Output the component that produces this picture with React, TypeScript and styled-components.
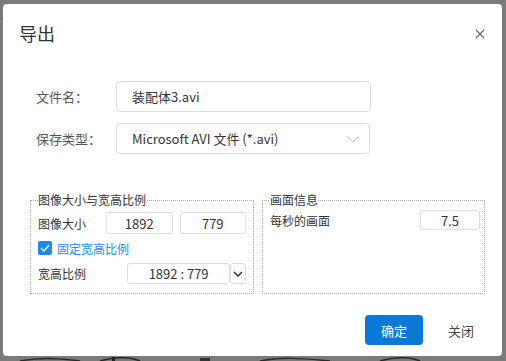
import React from "react";
import styled, { createGlobalStyle } from "styled-components";

const Global = createGlobalStyle`
  html, body { margin: 0; padding: 0; }
  body {
    width: 506px; height: 361px; overflow: hidden;
    font-family: "Noto Sans CJK SC", sans-serif;
    color: #333;
  }
`;

const Backdrop = styled.div`
  position: relative;
  width: 506px;
  height: 361px;
  box-sizing: border-box;
  padding: 4px 4px 5px 3px;
  background: #7b7b7b;
  display: flex;
`;

const BgArt = styled.svg`
  position: absolute;
  left: 0; top: 0;
`;

const Dialog = styled.div`
  position: relative;
  flex: 1;
  background: #fff;
  border-radius: 4px;
  display: flex;
  flex-direction: column;
`;

const Header = styled.div`
  height: 58px;
  display: flex;
  align-items: center;
  justify-content: space-between;
  padding: 0 16px 0 16px;
`;

const Title = styled.div`
  font-size: 18px;
  color: #333;
  line-height: 24px;
`;

const Close = styled.div`
  width: 12px;
  height: 12px;
  display: flex;
  align-items: center;
  justify-content: center;
  margin-top: 1px;
`;

const Form = styled.div`
  display: flex;
  flex-direction: column;
  gap: 11px;
  padding: 19px 0 0 33px;
`;

const FormRow = styled.div`
  display: flex;
  align-items: center;
`;

const Label = styled.div`
  width: 80px;
  font-size: 13px;
  color: #555;
`;

const TextBox = styled.div<{ $w: number }>`
  box-sizing: border-box;
  width: ${(p) => p.$w}px;
  height: 31px;
  border: 1px solid #dcdcdc;
  border-radius: 4px;
  display: flex;
  align-items: center;
  justify-content: space-between;
  padding: 0 9px 0 15px;
  font-size: 13px;
  color: #333;
`;

const Groups = styled.div`
  display: flex;
  gap: 8px;
  padding: 38px 0 0 27px;
`;

const Group = styled.fieldset<{ $w: number; $pr: number }>`
  box-sizing: border-box;
  width: ${(p) => p.$w}px;
  height: 102px;
  margin: 0;
  padding: 0 ${(p) => p.$pr}px 0 7px;
  border: 1px dotted #a8a8a8;
  min-width: 0;
  display: flex;
  flex-direction: column;
`;

const Legend = styled.legend`
  padding: 0;
  font-size: 12px;
  line-height: 16px;
  color: #333;
`;

const GRow = styled.div<{ $h: number; $mt: number }>`
  display: flex;
  align-items: center;
  height: ${(p) => p.$h}px;
  margin-top: ${(p) => p.$mt}px;
  font-size: 12px;
`;

const GLabel = styled.div<{ $w?: number }>`
  width: ${(p) => (p.$w ? `${p.$w}px` : "auto")};
  flex: ${(p) => (p.$w ? "none" : "1")};
  color: #333;
`;

const SmallBox = styled.div<{ $w: number; $h: number; $ml?: number }>`
  box-sizing: border-box;
  width: ${(p) => p.$w}px;
  height: ${(p) => p.$h}px;
  margin-left: ${(p) => p.$ml ?? 0}px;
  border: 1px solid #dedede;
  border-radius: 3px;
  display: flex;
  align-items: center;
  justify-content: center;
  font-size: 13px;
  color: #333;
`;

const DropBtn = styled.div`
  box-sizing: border-box;
  width: 16px;
  height: 21px;
  border: 1px solid #dedede;
  border-radius: 3px;
  display: flex;
  align-items: center;
  justify-content: center;
`;

const Check = styled.div`
  width: 14px;
  height: 14px;
  border-radius: 2px;
  background: #1a8cf0;
  display: flex;
  align-items: center;
  justify-content: center;
  margin-right: 5px;
`;

const CheckText = styled.span`
  color: #1a8cf0;
`;

const Footer = styled.div`
  margin-top: auto;
  display: flex;
  justify-content: flex-end;
  align-items: center;
  gap: 9px;
  padding: 0 12px 11px 0;
`;

const Button = styled.button<{ $primary?: boolean }>`
  width: 58px;
  height: 30px;
  border: none;
  border-radius: 4px;
  font-size: 13px;
  font-family: "Noto Sans CJK SC", sans-serif;
  background: ${(p) => (p.$primary ? "#0a79d8" : "transparent")};
  color: ${(p) => (p.$primary ? "#fff" : "#444")};
  padding: 0;
`;

export default function App() {
  return (
    <>
      <Global />
      <Backdrop>
        <BgArt width="506" height="361">
          <path d="M0 19 H3" stroke="#6a6a6a" />
          <path d="M20 361 C40 357 60 358 80 361 M100 361 C115 357 130 357 140 361 M260 361 C280 357 300 358 330 361 M380 361 C395 357 410 357 420 361" stroke="#2a2a2a" strokeWidth="1.5" fill="none" />
          <rect x="112" y="357" width="3" height="4" fill="#222" />
          <rect x="200" y="358" width="10" height="3" fill="#333" />
        </BgArt>
        <Dialog>
          <Header>
            <Title>导出</Title>
            <Close>
              <svg width="10" height="10" viewBox="0 0 10 10">
                <path d="M1 1 L9 9 M9 1 L1 9" stroke="#666" strokeWidth="1.2" />
              </svg>
            </Close>
          </Header>
          <Form>
            <FormRow>
              <Label>文件名：</Label>
              <TextBox $w={255}>装配体3.avi</TextBox>
            </FormRow>
            <FormRow>
              <Label>保存类型：</Label>
              <TextBox $w={254}>
                <span>Microsoft AVI 文件 (*.avi)</span>
                <svg width="14" height="8" viewBox="0 0 14 8">
                  <path d="M1 1 L7 7 L13 1" stroke="#c4c4c4" strokeWidth="1" fill="none" />
                </svg>
              </TextBox>
            </FormRow>
          </Form>
          <Groups>
            <Group $w={224} $pr={7}>
              <Legend>图像大小与宽高比例</Legend>
              <GRow $h={22} $mt={4}>
                <GLabel $w={68}>图像大小</GLabel>
                <SmallBox $w={67} $h={22}>1892</SmallBox>
                <SmallBox $w={67} $h={22} $ml={7}>779</SmallBox>
              </GRow>
              <GRow $h={16} $mt={6}>
                <Check>
                  <svg width="10" height="8" viewBox="0 0 10 8">
                    <path d="M1 4 L4 7 L9 1" stroke="#fff" strokeWidth="1.4" fill="none" />
                  </svg>
                </Check>
                <CheckText>固定宽高比例</CheckText>
              </GRow>
              <GRow $h={21} $mt={7}>
                <GLabel $w={89}>宽高比例</GLabel>
                <SmallBox $w={105} $h={21}>1892 : 779</SmallBox>
                <DropBtn>
                  <svg width="10" height="6" viewBox="0 0 10 6">
                    <path d="M1 1 L5 5 L9 1" stroke="#333" strokeWidth="1.5" fill="none" />
                  </svg>
                </DropBtn>
              </GRow>
            </Group>
            <Group $w={223} $pr={4}>
              <Legend>画面信息</Legend>
              <GRow $h={20} $mt={2}>
                <GLabel>每秒的画面</GLabel>
                <SmallBox $w={60} $h={20}>7.5</SmallBox>
              </GRow>
            </Group>
          </Groups>
          <Footer>
            <Button $primary>确定</Button>
            <Button>关闭</Button>
          </Footer>
        </Dialog>
      </Backdrop>
    </>
  );
}
